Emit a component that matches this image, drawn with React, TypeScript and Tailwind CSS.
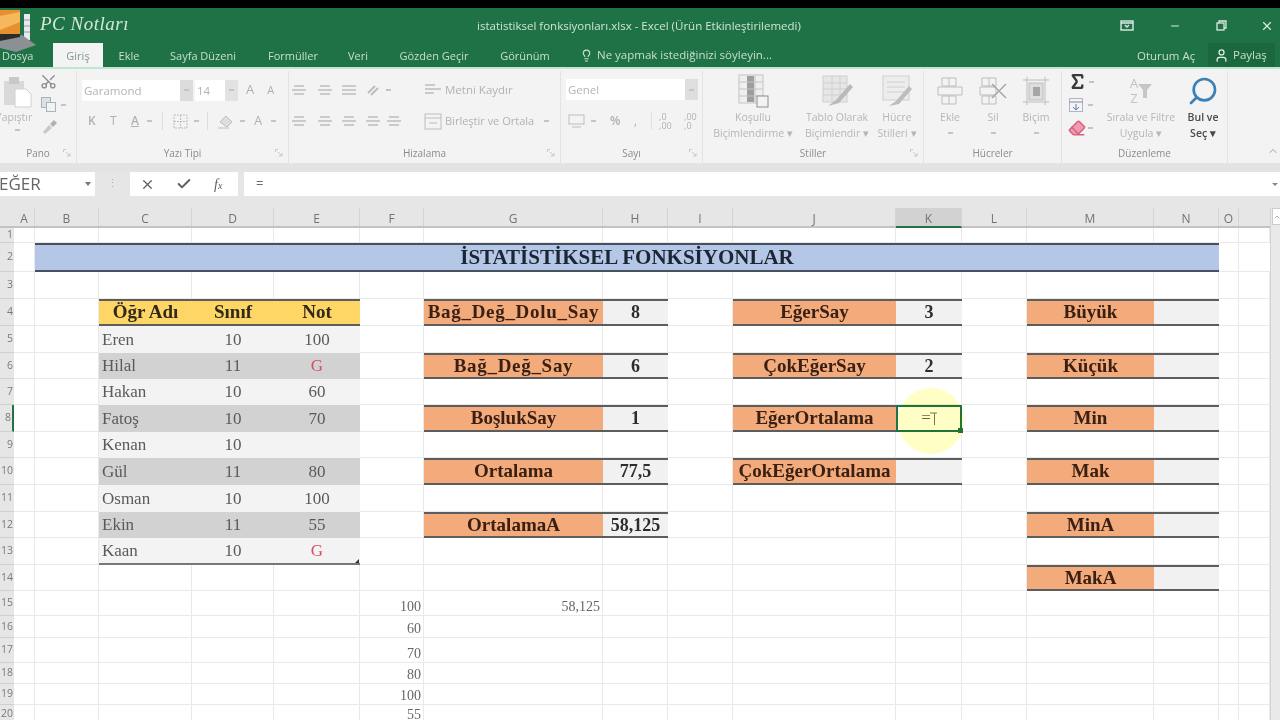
import { Scissors, Lightbulb, User, X, Check, Search, Sigma, Eraser, Minus, ChevronUp } from 'lucide-react'
import type { ReactNode } from 'react'

type Cell = { t?: string; c?: string }
type Row = { n: number; h?: string; cells: Record<string, Cell> }

const COLS = ['A', 'B', 'C', 'D', 'E', 'F', 'G', 'H', 'I', 'J', 'K', 'L', 'M', 'N', 'O', 'P']
const HEAD: { l: string; w: string }[] = [
  { l: 'A', w: 'w-[21px]' },
  { l: 'B', w: 'w-[64px]' },
  { l: 'C', w: 'w-[93px]' },
  { l: 'D', w: 'w-[82px]' },
  { l: 'E', w: 'w-[86px]' },
  { l: 'F', w: 'w-[64px]' },
  { l: 'G', w: 'w-[179px]' },
  { l: 'H', w: 'w-[65px]' },
  { l: 'I', w: 'w-[65px]' },
  { l: 'J', w: 'w-[163px]' },
  { l: 'K', w: 'w-[66px]' },
  { l: 'L', w: 'w-[65px]' },
  { l: 'M', w: 'w-[127px]' },
  { l: 'N', w: 'w-[65px]' },
  { l: 'O', w: 'w-[20px]' },
]

const label = 'bg-[#f4ab7c] border-y-2 border-[#5d5d5d] justify-center font-bold text-[19px] text-[#3a2013]'
const labelWide = `${label} tracking-[0.7px]`
const value = 'bg-[#f1f1f1] border-y-2 border-[#5d5d5d] justify-center font-bold text-[18px] text-[#2d2d2d]'
const yellow = 'bg-[#fdd665] border-y-2 border-[#5d5d5d] justify-center font-bold text-[19px] text-[#33291a]'
const light = 'bg-[#f3f3f3] justify-center text-[#5a5a5a]'
const dark = 'bg-[#d2d2d2] justify-center text-[#5a5a5a]'
const lightName = 'bg-[#f3f3f3] pl-[3px] text-[#5a5a5a]'
const darkName = 'bg-[#d2d2d2] pl-[3px] text-[#5a5a5a]'
const endC = 'border-b-2 border-[#777777]'
const small = 'items-end justify-end pr-[2px] text-[14px] leading-[16px] text-[#666666] border-r border-b border-[#e9e9e9]'

function student(i: number, name: string, cls: string, not: string, bad = false): Record<string, Cell> {
  const odd = i % 2 === 0
  return {
    C: { t: name, c: odd ? lightName : darkName },
    D: { t: cls, c: odd ? light : dark },
    E: { t: not, c: `${odd ? light : dark} ${bad ? 'text-[#dc4a5e]' : ''}` },
  }
}

const ROWS: Row[] = [
  { n: 1, cells: {} },
  { n: 2, cells: {} },
  { n: 3, cells: {} },
  {
    n: 4,
    cells: {
      C: { t: 'Öğr Adı', c: yellow },
      D: { t: 'Sınıf', c: yellow },
      E: { t: 'Not', c: yellow },
      G: { t: 'Bağ_Değ_Dolu_Say', c: labelWide },
      H: { t: '8', c: value },
      J: { t: 'EğerSay', c: label },
      K: { t: '3', c: value },
      M: { t: 'Büyük', c: label },
      N: { c: value },
    },
  },
  { n: 5, cells: student(0, 'Eren', '10', '100') },
  {
    n: 6,
    cells: {
      ...student(1, 'Hilal', '11', 'G', true),
      G: { t: 'Bağ_Değ_Say', c: labelWide },
      H: { t: '6', c: value },
      J: { t: 'ÇokEğerSay', c: label },
      K: { t: '2', c: value },
      M: { t: 'Küçük', c: label },
      N: { c: value },
    },
  },
  { n: 7, cells: student(2, 'Hakan', '10', '60') },
  {
    n: 8,
    cells: {
      ...student(3, 'Fatoş', '10', '70'),
      G: { t: 'BoşlukSay', c: label },
      H: { t: '1', c: value },
      J: { t: 'EğerOrtalama', c: label },
      M: { t: 'Min', c: label },
      N: { c: value },
    },
  },
  { n: 9, cells: student(4, 'Kenan', '10', '') },
  {
    n: 10,
    cells: {
      ...student(5, 'Gül', '11', '80'),
      G: { t: 'Ortalama', c: label },
      H: { t: '77,5', c: value },
      J: { t: 'ÇokEğerOrtalama', c: label },
      K: { c: value },
      M: { t: 'Mak', c: label },
      N: { c: value },
    },
  },
  { n: 11, cells: student(6, 'Osman', '10', '100') },
  {
    n: 12,
    cells: {
      ...student(7, 'Ekin', '11', '55'),
      G: { t: 'OrtalamaA', c: label },
      H: { t: '58,125', c: value },
      M: { t: 'MinA', c: label },
      N: { c: value },
    },
  },
  {
    n: 13,
    cells: {
      C: { t: 'Kaan', c: `${lightName} ${endC}` },
      D: { t: '10', c: `${light} ${endC}` },
      E: { t: 'G', c: `${light} ${endC} text-[#dc4a5e]` },
    },
  },
  { n: 14, cells: { M: { t: 'MakA', c: label }, N: { c: value } } },
  { n: 15, cells: { F: { t: '100', c: small }, G: { t: '58,125', c: small } } },
  { n: 16, cells: { F: { t: '60', c: small } } },
  { n: 17, cells: { F: { t: '70', c: small } } },
  { n: 18, cells: { F: { t: '80', c: small } } },
  { n: 19, cells: { F: { t: '100', c: small } } },
  { n: 20, cells: { F: { t: '55', c: small } } },
]

function Ico({ w = 16, h = 16, children, className = '' }: { w?: number; h?: number; children: ReactNode; className?: string }) {
  return (
    <svg width={w} height={h} viewBox={`0 0 ${w} ${h}`} fill="none" stroke="#bdbdbd" className={`shrink-0 ${className}`}>
      {children}
    </svg>
  )
}

const Caret = ({ className = '' }: { className?: string }) => (
  <span className={`w-[5px] h-[2px] bg-[#c4c4c4] shrink-0 ${className}`} />
)

const Lines = ({ wide = false }: { wide?: boolean }) => (
  <Ico w={14} h={12}>
    <path d={wide ? 'M0 2h14M0 6h14M0 10h14' : 'M2 2h10M0 6h14M2 10h10'} strokeWidth="1.5" />
  </Ico>
)

function Launcher() {
  return (
    <svg width="8" height="8" viewBox="0 0 8 8" fill="none" stroke="#c8c8c8" className="absolute right-[5px] bottom-[6px]">
      <path d="M.5 3V.5H3M3 3l4 4M7 4v3H4" />
    </svg>
  )
}

function Group({ w, title, children, launcher = true }: { w: string; title: string; children: ReactNode; launcher?: boolean }) {
  return (
    <div className={`${w} relative flex flex-col border-r border-[#e2e2e2] shrink-0 mt-[2px]`}>
      <div className="flex-1 min-h-0">{children}</div>
      <div className="h-[19px] text-center text-[10px] leading-[18px] text-[#8c8c8c]">{title}</div>
      {launcher && <Launcher />}
    </div>
  )
}

function BigBtn({ w, l1, l2, icon, dark: isDark = false }: { w: string; l1: string; l2?: string; icon: ReactNode; dark?: boolean }) {
  return (
    <div className={`${w} flex flex-col items-center text-[10.5px] leading-[16px] whitespace-nowrap ${isDark ? 'text-[#4a4a4a] font-semibold' : 'text-[#b6b6b6]'}`}>
      <div className="h-[36px] mt-[2px] flex items-center justify-center">{icon}</div>
      <span>{l1}</span>
      <span>{l2 ?? <Caret className="inline-block mb-[3px]" />}</span>
    </div>
  )
}

const TABS: { t: string; w: string; c?: string }[] = [
  { t: 'Giriş', w: 'w-[50px]', c: 'bg-[#f3f3f3] text-[#7e9a88]' },
  { t: 'Ekle', w: 'w-[52px]' },
  { t: 'Sayfa Düzeni', w: 'w-[96px]' },
  { t: 'Formüller', w: 'w-[84px]' },
  { t: 'Veri', w: 'w-[46px]' },
  { t: 'Gözden Geçir', w: 'w-[106px]' },
  { t: 'Görünüm', w: 'w-[76px]' },
]

export default function App() {
  return (
    <div className="relative w-[1280px] h-[720px] overflow-hidden bg-white font-['Open_Sans',sans-serif] blur-[0.7px]">
      <div className="h-[8px] bg-black" />

      {/* title bar */}
      <div className="h-[35px] bg-[#1f7246] flex items-center text-[#cfe3d6]">
        <div className="w-[1120px] shrink-0 pl-[158px] text-center text-[11.5px] whitespace-nowrap">istatistiksel fonksiyonları.xlsx - Excel (Ürün Etkinleştirilemedi)</div>
        <div className="flex items-center gap-[35px]">
          <svg width="14" height="11" viewBox="0 0 14 11" fill="none" stroke="#dcebe2" strokeWidth="1.4">
            <rect x="1" y="1" width="12" height="9" />
            <path d="M1 3h12M5 5l2 2 2-2" />
          </svg>
          <Minus size={12} className="text-[#dcebe2]" />
          <svg width="11" height="11" viewBox="0 0 11 11" fill="none" stroke="#dcebe2" strokeWidth="1.3">
            <rect x="1" y="3" width="7" height="7" />
            <path d="M3 3V1h7v7H8" />
          </svg>
        </div>
        <X size={14} className="text-[#dcebe2] ml-[33px]" />
      </div>

      {/* tabs */}
      <div className="h-[24px] bg-[#1f7246] flex items-stretch text-[11px] text-[#c9dfd1] whitespace-nowrap">
        <div className="w-[53px] pl-[2px] leading-[25px]">Dosya</div>
        {TABS.map((tab) => (
          <div key={tab.t} className={`${tab.w} text-center leading-[25px] ${tab.c ?? ''}`}>
            {tab.t}
          </div>
        ))}
        <div className="flex items-center gap-[4px] ml-[17px] w-[557px] text-[11.5px]">
          <Lightbulb size={13} className="text-[#cfe3d6]" />
          <span>Ne yapmak istediğinizi söyleyin...</span>
        </div>
        <div className="leading-[25px] w-[71px] text-[11.5px]">Oturum Aç</div>
        <div className="flex items-center gap-[4px] bg-[#1b683e] pl-[6px] w-[67px] text-[11.5px]">
          <User size={15} className="text-[#e3efe8]" />
          <span>Paylaş</span>
        </div>
      </div>

      {/* ribbon */}
      <div className="h-[96px] bg-[#f3f3f3] border-t-2 border-[#bfe6cf] flex">
        <Group w="w-[77px]" title="Pano">
          <div className="flex">
            <div className="w-[40px] flex flex-col items-center overflow-hidden text-[10.5px] text-[#b6b6b6] relative">
              <svg width="30" height="32" viewBox="0 0 30 32" className="mt-[5px] -ml-[4px]">
                <rect x="1" y="5" width="20" height="24" fill="#d9d9d9" />
                <rect x="6" y="1" width="10" height="7" fill="#c9c9c9" />
                <path d="M12 13h11l5 5v13H12z" fill="#ffffff" stroke="#d0d0d0" />
              </svg>
              <span className="-ml-[12px] mt-[2px] leading-[14px]">Yapıştır</span>
              <Caret className="mt-[5px] -ml-[6px] w-[4px]" />
            </div>
            <div className="flex flex-col gap-[6px] mt-[2px]">
              <Scissors size={17} className="text-[#8f8f8f] -rotate-90" />
              <div className="flex items-center gap-[4px]">
                <svg width="17" height="17" viewBox="0 0 17 17" fill="none" stroke="#a9b4b8">
                  <rect x="1.5" y="1.5" width="9" height="10" fill="#d9e2e5" />
                  <rect x="6.5" y="6.5" width="9" height="9" fill="#f3f3f3" />
                </svg>
                <Caret className="w-[4px]" />
              </div>
              <svg width="17" height="15" viewBox="0 0 17 15" className="ml-[1px]">
                <path d="M2 13l6-7 3 3-7 6z" fill="#c8c8c8" />
                <path d="M9 5l4-4 3 3-4 4z" fill="#b2b2b2" />
              </svg>
            </div>
          </div>
        </Group>

        <Group w="w-[212px]" title="Yazı Tipi">
          <div className="flex items-center h-[22px] mt-[8px] ml-[5px] text-[11.5px] text-[#b4b4b4]">
            <div className="w-[98px] h-[21px] bg-white leading-[21px] pl-[2px]">Garamond</div>
            <div className="w-[13px] h-[21px] bg-[#dcdcdc] flex items-center justify-center"><Caret className="w-[4px]" /></div>
            <div className="w-[2px]" />
            <div className="w-[30px] h-[21px] bg-white leading-[21px] pl-[2px]">14</div>
            <div className="w-[13px] h-[21px] bg-[#e2e2e2] flex items-center justify-center"><Caret className="w-[4px]" /></div>
            <span className="ml-[8px] text-[13px] text-[#b0b0b0]">A</span>
            <span className="ml-[13px] text-[11px] text-[#b0b0b0]">A</span>
          </div>
          <div className="flex items-center h-[20px] mt-[10px] ml-[11px] text-[12px] text-[#b2b2b2] font-semibold">
            <span className="w-[22px]">K</span>
            <span className="w-[21px] font-normal">T</span>
            <span className="w-[14px] underline">A</span>
            <Caret className="w-[5px] ml-[2px]" />
            <span className="w-px h-[18px] bg-[#dddddd] ml-[10px]" />
            <Ico w={16} h={15} className="ml-[10px]">
              <rect x="1" y="1" width="13" height="13" strokeDasharray="2 1" />
              <path d="M7.5 1v13M1 7.5h13" strokeDasharray="2 1" />
            </Ico>
            <Caret className="w-[5px] ml-[5px]" />
            <span className="w-px h-[18px] bg-[#dddddd] ml-[8px]" />
            <Ico w={18} h={16} className="ml-[9px]">
              <path d="M3 9l6-6 6 6-5 5z" fill="#dedede" />
              <path d="M1 15h11" stroke="#d8d8d8" strokeWidth="2" />
            </Ico>
            <Caret className="w-[5px] ml-[5px]" />
            <span className="ml-[9px] w-[16px] font-normal text-[13px]">A</span>
            <Caret className="w-[5px] ml-[1px]" />
          </div>
        </Group>

        <Group w="w-[272px]" title="Hizalama">
          <div className="flex items-center h-[22px] mt-[8px] ml-[3px]">
            <Lines />
            <span className="w-[12px]" />
            <Lines />
            <span className="w-[10px]" />
            <Lines wide />
            <span className="w-[10px]" />
            <Ico w={16} h={14}>
              <path d="M2 10l7-7M5 12l7-7" strokeWidth="2" />
            </Ico>
            <Caret className="w-[4px] ml-[4px]" />
            <span className="w-[33px]" />
            <Ico w={18} h={16}>
              <path d="M1 3h10M1 7h16M1 11h9" strokeWidth="1.5" />
            </Ico>
            <span className="ml-[3px] text-[11.5px] text-[#b2b2b2]">Metni Kaydır</span>
          </div>
          <div className="flex items-center h-[20px] mt-[10px] ml-[3px]">
            <Lines />
            <span className="w-[12px]" />
            <Lines />
            <span className="w-[10px]" />
            <Lines />
            <span className="w-[10px]" />
            <Lines />
            <span className="w-[7px]" />
            <Lines />
            <span className="w-[23px]" />
            <Ico w={18} h={17}>
              <rect x="1" y="1" width="16" height="15" />
              <path d="M1 5h16M5 10h8" />
            </Ico>
            <span className="ml-[3px] text-[11px] text-[#b2b2b2]">Birleştir ve Ortala</span>
            <Caret className="w-[4px] ml-[10px]" />
          </div>
        </Group>

        <Group w="w-[142px]" title="Sayı">
          <div className="flex h-[21px] mt-[8px] ml-[5px] w-[132px] text-[11.5px] text-[#b4b4b4]">
            <div className="flex-1 bg-white leading-[21px] pl-[2px]">Genel</div>
            <div className="w-[13px] bg-[#dedede] flex items-center justify-center"><Caret className="w-[4px]" /></div>
          </div>
          <div className="flex items-center h-[20px] mt-[11px] ml-[7px] text-[12px] text-[#b0b0b0]">
            <Ico w={18} h={15}>
              <rect x="1" y="1" width="15" height="9" />
              <path d="M4 13h9" />
            </Ico>
            <Caret className="w-[4px] ml-[5px]" />
            <span className="ml-[14px] w-[17px] font-semibold">%</span>
            <span className="ml-[7px]">,</span>
            <span className="w-px h-[18px] bg-[#e0e0e0] ml-[14px]" />
            <span className="ml-[7px] text-[9px] leading-[9px] w-[18px]">,0<br />,00</span>
            <span className="ml-[7px] text-[9px] leading-[9px] w-[18px]">,00<br />,0</span>
          </div>
        </Group>

        <Group w="w-[221px]" title="Stiller">
          <div className="flex">
            <BigBtn
              w="w-[100px]"
              l1="Koşullu"
              l2="Biçimlendirme ▾"
              icon={
                <svg width="32" height="34" viewBox="0 0 32 34" fill="none" stroke="#c4c4c4">
                  <rect x="2" y="1" width="24" height="28" fill="#efefef" />
                  <rect x="10" y="2" width="7" height="26" fill="#9e9e9e" stroke="none" />
                  <path d="M2 8h24M2 15h24M2 22h24M18 1v28" />
                  <rect x="20" y="22" width="11" height="11" fill="#f3f3f3" stroke="#8f8f8f" />
                </svg>
              }
            />
            <BigBtn
              w="w-[68px]"
              l1="Tablo Olarak"
              l2="Biçimlendir ▾"
              icon={
                <svg width="34" height="34" viewBox="0 0 34 34" fill="none" stroke="#d0d0d0">
                  <rect x="3" y="2" width="24" height="26" fill="#e6e6e6" />
                  <path d="M3 9h24M3 15h24M3 21h24M12 2v26M20 2v26" />
                  <path d="M8 32l8-6 14-16 3 3-14 16z" fill="#b9b9b9" stroke="none" />
                </svg>
              }
            />
            <BigBtn
              w="w-[52px]"
              l1="Hücre"
              l2="Stilleri ▾"
              icon={
                <svg width="32" height="34" viewBox="0 0 32 34" fill="none" stroke="#cfcfcf">
                  <rect x="2" y="2" width="26" height="24" fill="#ededed" />
                  <path d="M6 8h18M6 13h18M6 18h18" />
                  <path d="M8 32l7-5 13-15 3 3-13 15z" fill="#bdbdbd" stroke="none" />
                </svg>
              }
            />
          </div>
        </Group>

        <Group w="w-[138px]" title="Hücreler" launcher={false}>
          <div className="flex pl-[4px]">
            <BigBtn
              w="w-[44px]"
              l1="Ekle"
              icon={
                <Ico w={28} h={30}>
                  <path d="M6 2h14v8H6zM2 11h24v8H2zM6 20h14v8H6zM13 2v8M13 20v8" />
                </Ico>
              }
            />
            <BigBtn
              w="w-[42px]"
              l1="Sil"
              icon={
                <Ico w={30} h={30}>
                  <path d="M4 2h14v8H4zM2 11h16v8H2zM4 20h14v8H4zM11 2v8M11 20v8" />
                  <path d="M14 8l14 14M28 8L14 22" stroke="#a8a8a8" strokeWidth="1.5" />
                </Ico>
              }
            />
            <BigBtn
              w="w-[44px]"
              l1="Biçim"
              icon={
                <Ico w={30} h={32}>
                  <path d="M2 5h26M6 2v28M24 2v28M2 27h26" />
                  <rect x="8" y="8" width="14" height="17" fill="#dedede" />
                  <rect x="12" y="12" width="7" height="9" fill="#a6a6a6" stroke="none" />
                </Ico>
              }
            />
          </div>
        </Group>

        <Group w="w-[166px]" title="Düzenleme" launcher={false}>
          <div className="flex">
            <div className="w-[34px] pl-[6px] pt-[1px] flex flex-col gap-[6px]">
              <div className="flex items-center gap-[2px]">
                <Sigma size={19} strokeWidth={3} className="text-[#3a3a3a]" />
                <Caret className="w-[3px] bg-[#777777]" />
              </div>
              <div className="flex items-center gap-[4px]">
                <svg width="16" height="16" viewBox="0 0 16 16" fill="none" stroke="#aeb4ca">
                  <rect x="1.5" y="1.5" width="13" height="13" />
                  <path d="M1.5 5h13" stroke="#8a8a8a" />
                  <path d="M8 7v6M5 10l3 3 3-3" stroke="#5e7ab5" />
                </svg>
                <Caret className="w-[3px]" />
              </div>
              <div className="flex items-center gap-[2px]">
                <Eraser size={18} className="text-[#d9607e] fill-[#ee9bb0]" />
                <Caret className="w-[3px] bg-[#777777]" />
              </div>
            </div>
            <BigBtn
              w="w-[90px]"
              l1="Sırala ve Filtre"
              l2="Uygula ▾"
              icon={
                <div className="flex items-center text-[#c2c2c2] text-[13px] leading-[15px]">
                  <span className="flex flex-col items-center">
                    <span>A</span>
                    <span>Z</span>
                  </span>
                  <svg width="14" height="16" viewBox="0 0 14 16">
                    <path d="M0 1h14L9 7v8H5V7z" fill="#c6c6c6" />
                  </svg>
                </div>
              }
            />
            <BigBtn w="w-[34px]" l1="Bul ve" l2="Seç ▾" dark icon={<Search size={32} strokeWidth={2} className="text-[#3d80b6] -scale-x-100" />} />
          </div>
        </Group>

        <div className="flex-1 flex items-end justify-end pb-[6px] pr-[1px]">
          <ChevronUp size={12} className="text-[#a0a0a0]" />
        </div>
      </div>

      <div className="h-[9px] bg-[#e3e3e3]" />

      {/* formula bar */}
      <div className="h-[24px] bg-[#e6e6e6] flex items-stretch">
        <div className="w-[95px] bg-white flex items-center justify-between pr-[4px] overflow-hidden text-[17px] text-[#666666]">
          <span className="-ml-[1px]">EĞER</span>
          <span className="w-0 h-0 border-x-[3px] border-x-transparent border-t-[4px] border-t-[#777777]" />
        </div>
        <div className="w-[35px] text-center text-[#b0b0b0] text-[11px] leading-[22px]">⋮</div>
        <div className="w-[108px] bg-white flex items-center pl-[10px] text-[#5f5f5f]">
          <X size={15} />
          <Check size={16} strokeWidth={3} className="ml-[21px]" />
          <span className="ml-[22px] font-['Liberation_Serif',serif] italic text-[14px]">f<span className="text-[10px]">x</span></span>
        </div>
        <div className="w-[6px]" />
        <div className="flex-1 bg-white flex items-center pl-[12px] pr-[2px] justify-between text-[13px] text-[#6a6a6a]">
          <span>=</span>
          <span className="w-0 h-0 border-x-[3px] border-x-transparent border-t-[3px] border-t-[#888888]" />
        </div>
      </div>

      <div className="h-[12px] bg-[#e6e6e6]" />

      {/* sheet */}
      <div className="flex">
        <div className="w-[1270px] shrink-0">
          <div className="h-[20px] flex bg-[#e6e6e6] border-b-2 border-[#c3c3c3] text-[12px] text-[#737373] leading-[21px]">
            <div className="w-[14px]" />
            {HEAD.map((h) => (
              <div
                key={h.l}
                className={`${h.w} text-center border-r border-[#d4d4d4] ${h.l === 'K' ? 'bg-[#d2d2d2] border-b-2 border-b-[#217346] h-[20px]' : ''}`}
              >
                {h.l}
              </div>
            ))}
          </div>
          <div className="relative grid grid-cols-[14px_21px_64px_93px_82px_86px_64px_179px_65px_65px_163px_66px_65px_127px_65px_20px_31px] grid-rows-[15px_29px_27px_27px_27px_26px_26px_27px_26px_27px_27px_26px_27px_26px_25px_22px_25px_21px_21px_19px] font-['Liberation_Serif',serif] text-[17px]">
            {ROWS.map((row) => (
              <div key={row.n} className="contents">
                <div
                  className={`bg-[#e6e6e6] border-b border-[#cfcfcf] flex items-center justify-end pr-[1px] overflow-hidden font-['Open_Sans',sans-serif] text-[10.5px] text-[#7a7a7a] ${row.n === 8 ? 'bg-[#d2d2d2] border-r-2 border-r-[#217346]' : ''}`}
                >
                  {row.n}
                </div>
                {row.n === 2 ? (
                  <>
                    <div className="border-r border-b border-[#e9e9e9]" />
                    <div className="col-span-13 bg-[#b4c7e7] border-y-2 border-[#47505f] flex items-center justify-center font-bold text-[21px] text-[#1d2433]">
                      İSTATİSTİKSEL FONKSİYONLAR
                    </div>
                    <div className="border-r border-b border-[#e9e9e9]" />
                    <div className="border-b border-[#e9e9e9]" />
                  </>
                ) : (
                  COLS.map((col) => {
                    const cell = row.cells[col]
                    if (row.n === 8 && col === 'K') {
                      return (
                        <div key={col} className="relative border-2 border-[#217346] flex items-center justify-center text-[#666666] text-[17px]">
                          <span className="-mt-[2px]">=</span>
                          <svg width="7" height="15" viewBox="0 0 7 15" fill="none" stroke="#777777" className="ml-[-1px]">
                            <path d="M0 2h7M4.5 2v12" />
                          </svg>
                          <span className="absolute -right-[3px] -bottom-[3px] w-[5px] h-[5px] bg-[#217346]" />
                        </div>
                      )
                    }
                    return (
                      <div
                        key={col}
                        className={`flex items-center whitespace-nowrap ${cell?.c ?? 'border-r border-b border-[#e9e9e9]'}`}
                      >
                        {cell?.t}
                      </div>
                    )
                  })
                )}
              </div>
            ))}
            {/* mouse highlight */}
            <div className="absolute left-[898px] top-[160px] w-[66px] h-[66px] rounded-full bg-[#ffff8c]/50 mix-blend-multiply pointer-events-none" />
            {/* table resize handle */}
            <div className="absolute left-[355px] top-[331px] w-0 h-0 border-l-[4px] border-l-transparent border-b-[4px] border-b-[#333333]" />
          </div>
        </div>
        <div className="flex-1 bg-[#e9e9e9] border-l border-[#d4d4d4]">
          <div className="h-[17px] ml-[1px] bg-white border border-[#cccccc] flex items-center justify-center">
            <ChevronUp size={8} className="text-[#888888]" />
          </div>
        </div>
      </div>

      {/* channel logo */}
      <div className="absolute left-0 top-[10px] flex pointer-events-none">
        <svg width="38" height="44" viewBox="0 0 38 44">
          <rect x="0" y="0" width="20" height="24" fill="#e8902f" />
          <path d="M0 6l20-4v10L0 20z" fill="#f5b95c" />
          <rect x="24" y="4" width="6" height="26" fill="#e8e8ee" />
          <path d="M24 10h6M24 16h6M24 22h6" stroke="#9a9aa5" />
          <path d="M0 30l22-5 14 10-20 7L0 38z" fill="#8b9095" />
          <path d="M0 24h20v3L0 31z" fill="#2b2b2b" />
        </svg>
        <span className="ml-[2px] mt-[1px] font-['Liberation_Serif',serif] italic text-[19px] leading-[26px] text-[#d5e6da] tracking-[0.5px]">PC Notları</span>
      </div>
    </div>
  )
}
